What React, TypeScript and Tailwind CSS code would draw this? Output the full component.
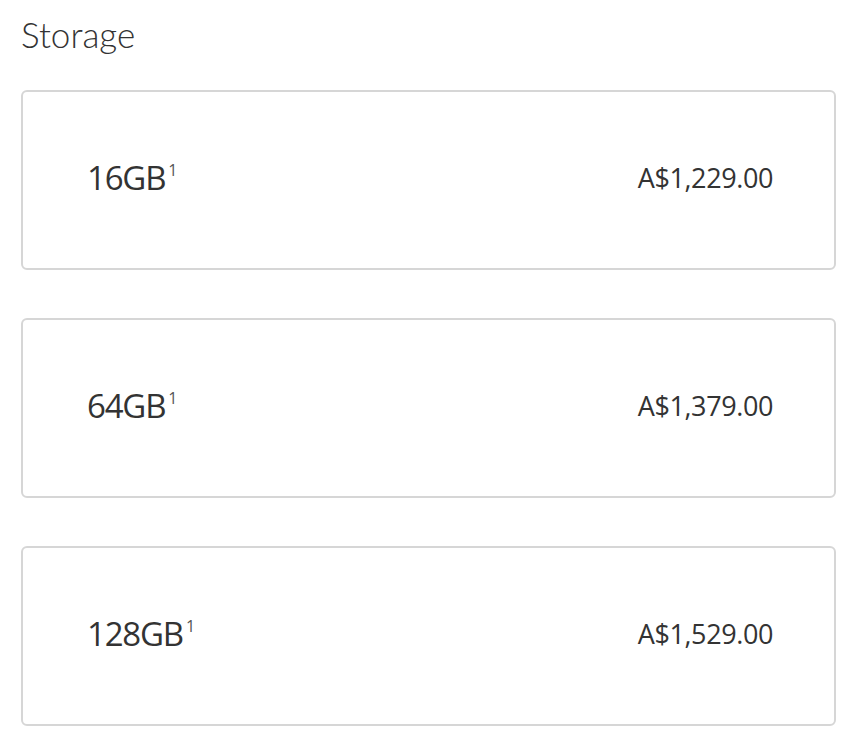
import React from "react";

const options = [
  { size: "16GB", price: "A$1,229.00" },
  { size: "64GB", price: "A$1,379.00" },
  { size: "128GB", price: "A$1,529.00" },
];

export default function App() {
  return (
    <div
      className="w-[850px] h-[742px] bg-white pl-[21px] pr-[14px] text-[#333333]"
      style={{ fontFamily: "Lato, 'Open Sans', sans-serif" }}
    >
      <h2 className="pt-[14px] text-[35px] leading-[40px] font-light">Storage</h2>
      <div className="mt-[36px] flex flex-col gap-[48px]">
        {options.map((o) => (
          <div
            key={o.size}
            className="h-[180px] rounded-[6px] border-2 border-[#d6d6d6] flex items-center justify-between pl-[64px] pr-[61px] pb-[6px]"
            style={{ fontFamily: "'Open Sans', Lato, sans-serif" }}
          >
            <div className="flex items-start text-[33px] leading-none font-normal tracking-[-1.2px]">
              <span>{o.size}</span>
              <span className="text-[16px] leading-none ml-[3px] mt-[1px] font-normal text-[#555555]">1</span>
            </div>
            <div className="text-[27px] leading-none font-normal tracking-[-0.4px]">{o.price}</div>
          </div>
        ))}
      </div>
    </div>
  );
}
